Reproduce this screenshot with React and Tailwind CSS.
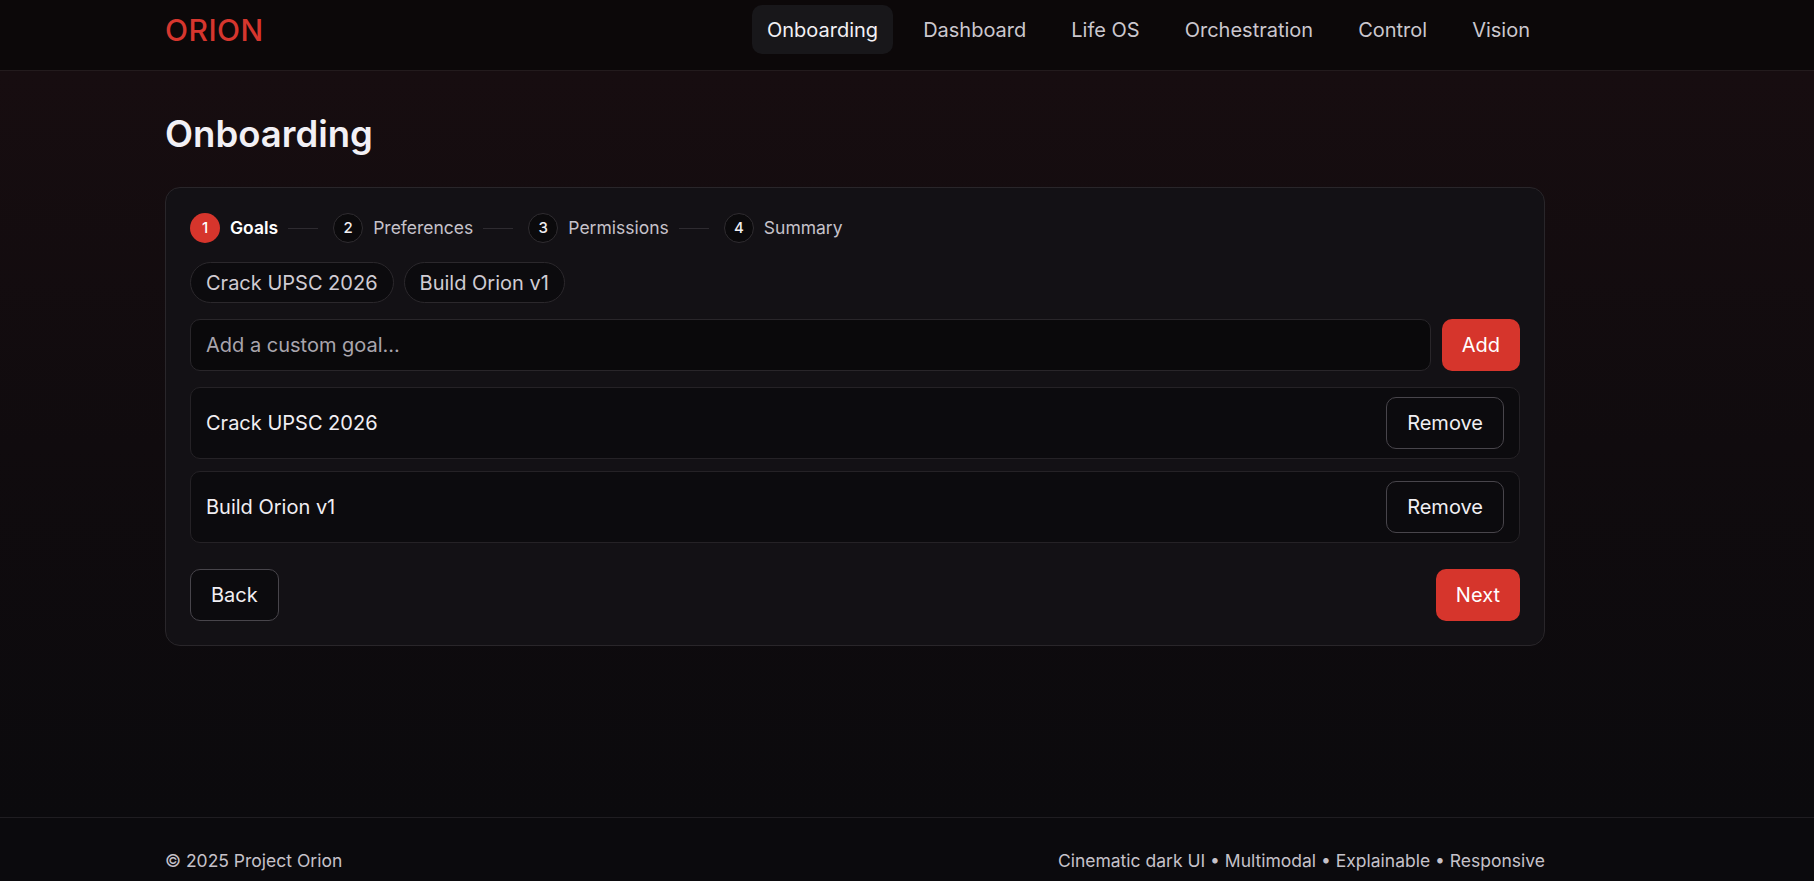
import React, { useState } from 'react';

const NAV = ['Onboarding', 'Dashboard', 'Life OS', 'Orchestration', 'Control', 'Vision'];
const STEPS = ['Goals', 'Preferences', 'Permissions', 'Summary'];

function Stepper({ current }) {
  return (
    <div className="flex items-center gap-[10px] h-[30px] mt-px">
      {STEPS.map((label, i) => (
        <React.Fragment key={label}>
          <div className="flex items-center gap-[10px]">
            <div
              className={
                i === current
                  ? 'w-[30px] h-[30px] rounded-full bg-[#d6352c] text-white flex items-center justify-center text-[15px] font-medium'
                  : 'w-[30px] h-[30px] rounded-full bg-[#0b0a0c] border border-[#2f2c30] text-[#f0eef2] flex items-center justify-center text-[15px] font-medium'
              }
            >
              {i + 1}
            </div>
            <span
              className={
                i === current
                  ? 'text-[17.5px] font-semibold text-white'
                  : 'text-[17.5px] text-[#c6c2ca]'
              }
            >
              {label}
            </span>
          </div>
          {i < STEPS.length - 1 && <div className="w-[30px] h-px bg-[#2e2b30] mr-[5px]" />}
        </React.Fragment>
      ))}
    </div>
  );
}

export default function App() {
  const [goals, setGoals] = useState(['Crack UPSC 2026', 'Build Orion v1']);
  const [draft, setDraft] = useState('');

  const addGoal = () => {
    if (!draft.trim()) return;
    setGoals([...goals, draft.trim()]);
    setDraft('');
  };

  return (
    <div className="font-[Inter,sans-serif] bg-[#0b0a0d] text-white">
      {/* Header */}
      <header className="bg-[#0c0809] border-b border-[#231b1d] pt-[5px] pb-[16px]">
        <div className="ml-[165px] w-[1380px] flex items-center justify-between h-[49px]">
          <div className="text-[30px] font-medium tracking-[0.5px] text-[#d6362e] leading-none">ORION</div>
          <nav className="flex items-center gap-[15px]">
            {NAV.map((item, i) => (
              <a
                key={item}
                className={
                  i === 0
                    ? 'h-[49px] px-[15px] flex items-center rounded-[10px] bg-[#18171a] text-[20px] text-[#f3f1f5]'
                    : 'h-[49px] px-[15px] flex items-center rounded-[10px] text-[20px] text-[#cbc7ce]'
                }
              >
                {item}
              </a>
            ))}
          </nav>
        </div>
      </header>

      {/* Main */}
      <main className="min-h-[746px] bg-linear-to-b from-[#170d10] via-[#100b0e] to-[#0b0a0d] pt-[42px]">
        <div className="ml-[165px] w-[1380px]">
          <h1 className="text-[36.5px] leading-[42px] font-semibold text-[#f2f0f5]">Onboarding</h1>

          <div className="mt-[32px] rounded-[15px] border border-[#29262a] bg-[#131115] p-[24px]">
            <Stepper current={0} />

            <div className="mt-[19px] flex gap-[10px]">
              {goals.map((g) => (
                <span
                  key={g}
                  className="h-[41px] px-[15px] flex items-center rounded-full border border-[#2b282c] bg-[#0c0b0e] text-[20px] text-[#d0ccd3]"
                >
                  {g}
                </span>
              ))}
            </div>

            <div className="mt-[16px] flex gap-[11px]">
              <input
                value={draft}
                onChange={(e) => setDraft(e.target.value)}
                placeholder="Add a custom goal..."
                className="flex-1 h-[52px] px-[15px] rounded-[10px] border border-[#29262a] bg-[#0a090b] text-[20px] text-white placeholder:text-[#a9a5ad] outline-none"
              />
              <button
                onClick={addGoal}
                className="h-[52px] px-[20px] rounded-[10px] bg-[#d6352c] text-[20px] text-white"
              >
                Add
              </button>
            </div>

            <div className="mt-[16px] flex flex-col gap-[12px]">
              {goals.map((g, i) => (
                <div
                  key={g + i}
                  className="h-[72px] px-[15px] flex items-center justify-between rounded-[10px] border border-[#252226] bg-[#0c0b0e]"
                >
                  <span className="text-[20px] text-[#f1eff3]">{g}</span>
                  <button
                    onClick={() => setGoals(goals.filter((_, j) => j !== i))}
                    className="h-[52px] px-[20px] rounded-[10px] border border-[#48454b] bg-[#0c0b0e] text-[20px] text-[#f1eff3]"
                  >
                    Remove
                  </button>
                </div>
              ))}
            </div>

            <div className="mt-[26px] flex items-center justify-between">
              <button className="h-[52px] px-[20px] rounded-[10px] border border-[#48454b] bg-[#0c0b0e] text-[20px] text-[#f1eff3]">
                Back
              </button>
              <button className="h-[52px] px-[20px] rounded-[10px] bg-[#d6352c] text-[20px] text-white">
                Next
              </button>
            </div>
          </div>
        </div>
      </main>

      {/* Footer */}
      <footer className="border-t border-[#1f1d21] bg-[#0b0a0d] py-[30px]">
        <div className="ml-[165px] w-[1380px] flex items-center justify-between text-[17.5px] leading-[25px] text-[#c6c2ca]">
          <span>© 2025 Project Orion</span>
          <span>Cinematic dark UI • Multimodal • Explainable • Responsive</span>
        </div>
      </footer>
    </div>
  );
}
